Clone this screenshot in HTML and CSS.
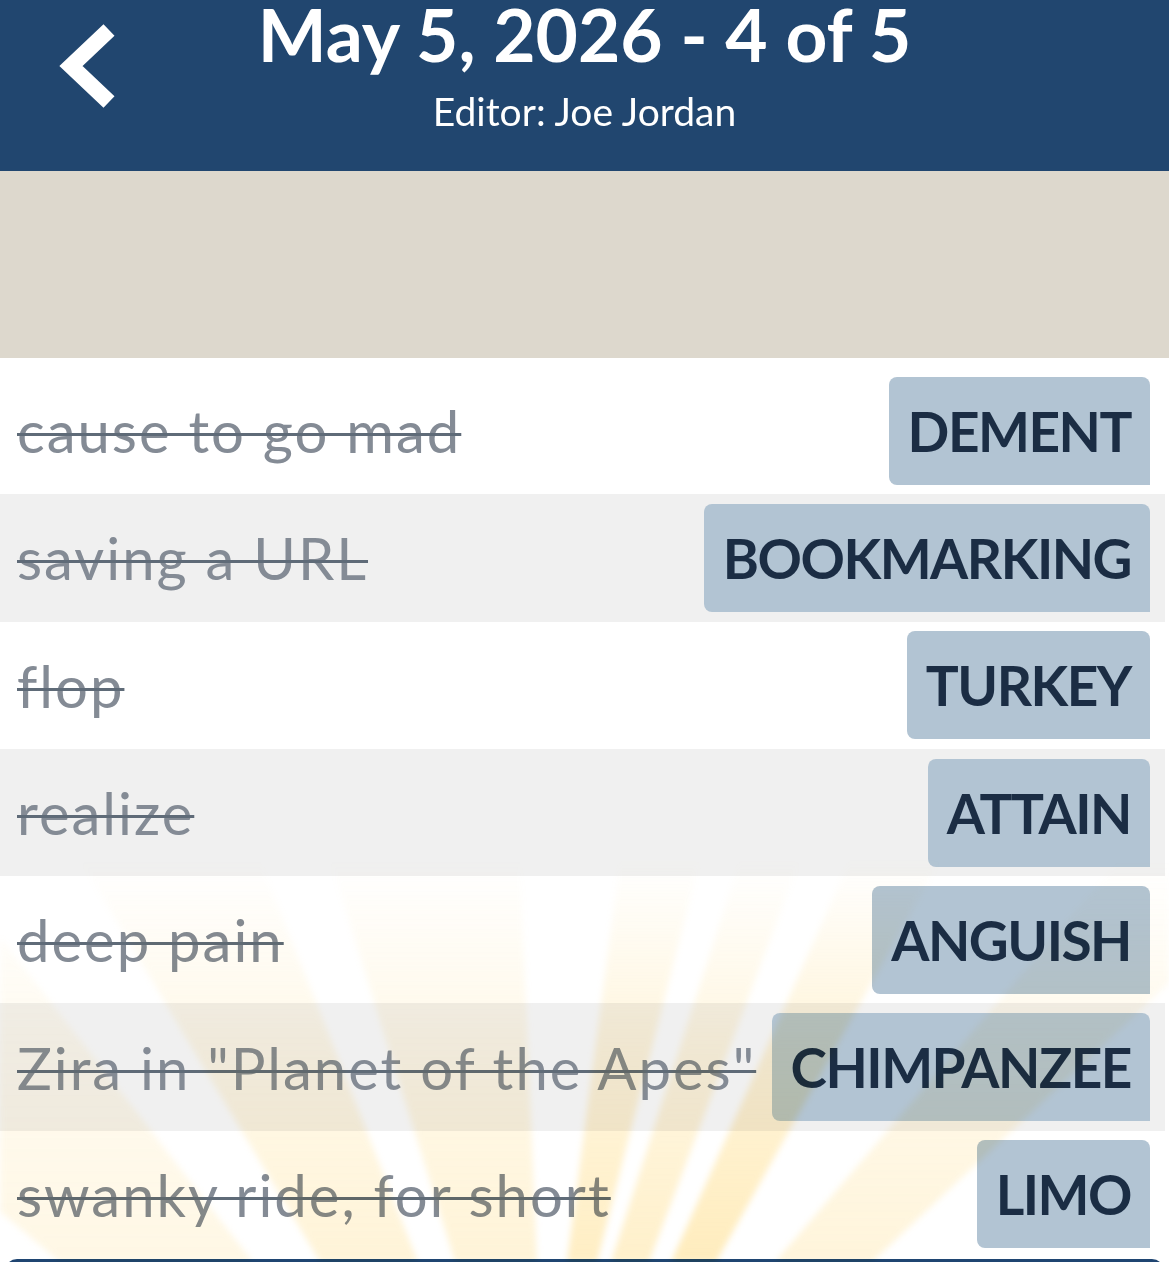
FILE: index.html
```html
<!DOCTYPE html>
<html lang="en">
<head>
    <meta charset="UTF-8">
    <meta name="viewport" content="width=device-width, initial-scale=1.0">
    <title>May 5, 2026 - 4 of 5</title>
    <link rel="stylesheet" href="styles.css">
</head>
<body>
    <header class="topbar">
        <a class="back" href="#" aria-label="Back">
            <svg width="64" height="90" viewBox="0 0 64 90">
                <polyline points="50,8 12,44 50,80" fill="none" stroke="#fff" stroke-width="16" stroke-linejoin="miter"/>
            </svg>
        </a>
        <div class="titles">
            <h1>May 5, 2026 - 4 of 5</h1>
            <p>Editor: Joe Jordan</p>
        </div>
    </header>

    <div class="banner"></div>

    <ul class="clues">
        <li class="clue-row"><span class="clue">cause to go mad</span><span class="answer">DEMENT</span></li>
        <li class="clue-row"><span class="clue">saving a URL</span><span class="answer">BOOKMARKING</span></li>
        <li class="clue-row"><span class="clue">flop</span><span class="answer">TURKEY</span></li>
        <li class="clue-row"><span class="clue">realize</span><span class="answer">ATTAIN</span></li>
        <li class="clue-row"><span class="clue">deep pain</span><span class="answer">ANGUISH</span></li>
        <li class="clue-row"><span class="clue">Zira in "Planet of the Apes"</span><span class="answer">CHIMPANZEE</span></li>
        <li class="clue-row"><span class="clue">swanky ride, for short</span><span class="answer">LIMO</span></li>
    </ul>

    <div class="footer-bar"></div>

    <!-- 完成時の光の筋 -->
    <svg class="rays" viewBox="0 0 1169 1262" aria-hidden="true">
        <defs>
            <linearGradient id="rayFade" gradientUnits="userSpaceOnUse" x1="0" y1="1262" x2="0" y2="860">
                <stop offset="0" stop-color="#ffd66e" stop-opacity="0.45"/>
                <stop offset="0.55" stop-color="#ffd66e" stop-opacity="0.25"/>
                <stop offset="1" stop-color="#ffd66e" stop-opacity="0"/>
            </linearGradient>
        </defs>
        <g fill="url(#rayFade)">
            <polygon points="60,1262 253,1262 -60,860 -420,860" opacity="0.4"/>
            <polygon points="320,1262 418,1262 260,860 80,860" opacity="0.6"/>
            <polygon points="455,1262 537,1262 520,860 330,860" opacity="0.6"/>
            <polygon points="567,1262 597,1262 700,860 620,860" opacity="0.9"/>
            <polygon points="611,1262 649,1262 800,860 740,860" opacity="0.8"/>
            <polygon points="671,1262 716,1262 940,860 850,860"/>
            <polygon points="775,1262 872,1262 1300,860 1120,860" opacity="0.55"/>
        </g>
    </svg>
</body>
</html>
```

FILE: styles.css
```css
/* ページ全体 */
body {
    margin: 0;
    padding: 0;
    font-family: Lato, "Noto Sans", sans-serif;
    background: #fff;
    height: 1262px;
    overflow: hidden;
    position: relative;
}

/* 上のヘッダー */
.topbar {
    background: #21466f;
    color: #fff;
    height: 171px;
    display: grid;
    grid-template-columns: 1fr auto 1fr;
    align-items: start;
}

.back {
    display: block;
    padding: 22px 0 0 59px;
}

.back svg {
    display: block;
}

.titles {
    text-align: center;
}

.titles h1 {
    margin: 0;
    padding-top: 2px;
    font-size: 73px;
    font-weight: 700;
    line-height: 64px;
}

.titles p {
    margin: 22px 0 0;
    font-size: 39px;
    line-height: 46px;
}

/* ベージュの帯 */
.banner {
    background: #ddd8cd;
    height: 187px;
}

/* 答えのリスト */
.clues {
    list-style: none;
    margin: 0;
    padding: 9px 4px 0 0;
}

.clue-row {
    height: 127.3px;
    box-sizing: border-box;
    display: flex;
    align-items: center;
    justify-content: space-between;
    padding: 0 15px 0 17px;
}

.clue-row:nth-child(even) {
    background: #f0f0f0;
}

.clue {
    color: #848b95;
    font-size: 58px;
    letter-spacing: 2px;
    white-space: nowrap;
    text-decoration: line-through;
    text-decoration-color: #5f6b78;
    text-decoration-thickness: 3px;
}

.answer {
    background: #b2c4d3;
    color: #1b2d44;
    font-size: 55px;
    font-weight: 700;
    letter-spacing: -1.5px;
    height: 108px;
    line-height: 108px;
    padding: 0 19px;
    border-radius: 8px 8px 0 8px;
    margin-left: auto;
}

/* 下の紺色のバー */
.footer-bar {
    background: #1f4571;
    height: 20px;
    margin: 1px 5px 0;
    border-radius: 12px 12px 0 0;
}

/* 光の筋 */
.rays {
    position: absolute;
    left: 0;
    top: 0;
    width: 1169px;
    height: 1262px;
    pointer-events: none;
    mix-blend-mode: multiply;
    filter: blur(3px);
}
```
